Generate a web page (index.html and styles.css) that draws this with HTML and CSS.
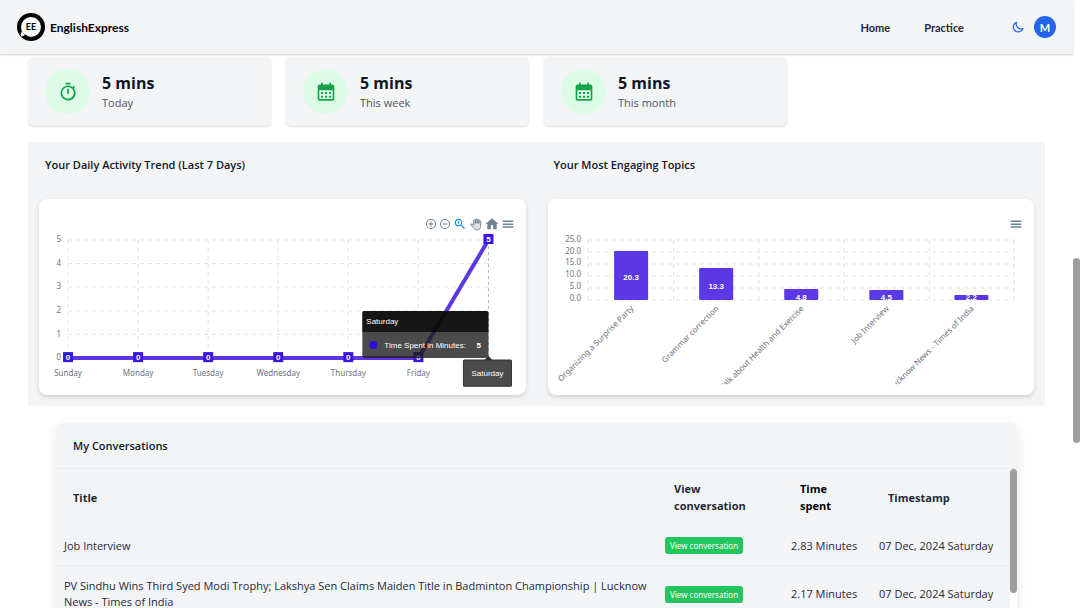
FILE: index.html
```html
<!DOCTYPE html>
<html lang="en">
<head>
<meta charset="utf-8">
<meta name="viewport" content="width=device-width, initial-scale=1">
<title>EnglishExpress</title>
<link rel="stylesheet" href="styles.css">
</head>
<body>
<header class="topbar">
  <a class="brand" href="#">
    <svg class="brand-mark" viewBox="0 0 28 28" aria-hidden="true">
      <circle cx="14" cy="14" r="14" fill="#050505"/>
      <circle cx="14" cy="14" r="10" fill="#f9fafb"/>
      <path d="M3.500 21.500L5 18l3 4.500-3.500 1z" fill="#f3f4f6"/>
      <path d="M5 24.500l3.500-3 3 2z" fill="#050505"/>
      <text x="14" y="17" class="mark-text">EE</text>
    </svg>
    <span>EnglishExpress</span>
  </a>
  <nav class="nav">
    <a href="#">Home</a>
    <a href="#">Practice</a>
  </nav>
  <div class="account">
    <button class="icon-btn" aria-label="Dark mode">
      <svg width="12" height="12" viewBox="0 0 24 24" fill="none" stroke="#2563eb" stroke-width="2.400" stroke-linejoin="round"><path d="M9 2.500a10 10 0 1 0 13 12.500c-8 3-16-4-13-12.500z"/></svg>
    </button>
    <button class="avatar">M</button>
  </div>
</header>

<main class="page">
  <section class="stats">
    <article class="stat">
      <span class="stat-icon"><svg viewBox="0 0 24 24" fill="#16a34a"><path d="M9 1h6v2H9zM11 8h2v6h-2z"/><path d="M19 7.400l1.400-1.400-1.400-1.400-1.500 1.400A9 9 0 1 0 19 7.400zM12 20a7 7 0 1 1 0-14 7 7 0 0 1 0 14z"/></svg></span>
      <div><p class="stat-value">5 mins</p><p class="stat-label">Today</p></div>
    </article>
    <article class="stat">
      <span class="stat-icon"><svg viewBox="0 0 24 24"><use href="#calendar"/></svg></span>
      <div><p class="stat-value">5 mins</p><p class="stat-label">This week</p></div>
    </article>
    <article class="stat">
      <span class="stat-icon"><svg viewBox="0 0 24 24"><defs><path id="calendar" fill="#16a34a" fill-rule="evenodd" d="M6 1h2v2h8V1h2v2h1.500A2.500 2.500 0 0 1 22 5.500v15a2 2 0 0 1-2 2H4a2 2 0 0 1-2-2v-15A2.500 2.500 0 0 1 4.500 3H6zM4 10v10.500h16V10zM6 12h2.500v2.500H6zm4.700 0h2.600v2.500h-2.600zm4.800 0H18v2.500h-2.500zM6 16.500h2.500V19H6zm4.700 0h2.600V19h-2.600zm4.800 0H18V19h-2.500z"/></defs><use href="#calendar"/></svg></span>
      <div><p class="stat-value">5 mins</p><p class="stat-label">This month</p></div>
    </article>
  </section>

  <section class="charts">
    <div class="chart">
      <h2 class="heading">Your Daily Activity Trend (Last 7 Days)</h2>
      <div class="chart-card">
        <div class="toolbar">
          <button class="icon-btn" aria-label="Zoom in"><svg width="12" height="12" viewBox="0 0 24 24" fill="#6e8192"><path d="M13 7h-2v4H7v2h4v4h2v-4h4v-2h-4zM12 2a10 10 0 1 0 0 20 10 10 0 0 0 0-20zm0 18a8 8 0 1 1 0-16 8 8 0 0 1 0 16z"/></svg></button>
          <button class="icon-btn" aria-label="Zoom out"><svg width="12" height="12" viewBox="0 0 24 24" fill="#6e8192"><path d="M7 11v2h10v-2zM12 2a10 10 0 1 0 0 20 10 10 0 0 0 0-20zm0 18a8 8 0 1 1 0-16 8 8 0 0 1 0 16z"/></svg></button>
          <button class="icon-btn" aria-label="Selection zoom"><svg width="14" height="14" viewBox="0 0 24 24" fill="#008ffb"><path d="M15.500 14h-.8l-.3-.3A6.500 6.500 0 1 0 13.700 14.400l.3.300v.8l5 5 1.500-1.500zm-6 0a4.500 4.500 0 1 1 0-9 4.500 4.500 0 0 1 0 9z"/><path d="M12 10h-2v2H9v-2H7V9h2V7h1v2h2z"/></svg></button>
          <button class="icon-btn" aria-label="Panning"><svg width="14" height="14" viewBox="0 0 24 24" fill="#dbe0e4" stroke="#6e8192" stroke-width="1.600" stroke-linejoin="round"><path d="M8 14V5.500q1.500-2 3 0V11 4q1.500-2 3 0v7-6q1.500-2 3 0v6-4q1.500-2 3 0v9c0 3-2 6-6 6s-5-2-7-4l-4-5c1-1.500 3-1 5 1z"/></svg></button>
          <button class="icon-btn" aria-label="Reset zoom"><svg width="14" height="14" viewBox="0 0 24 24" fill="#6e8192"><path d="M10 21v-7h4v7h6v-9h3L12 2 1 12h3v9z"/></svg></button>
          <button class="icon-btn" aria-label="Menu"><svg width="14" height="14" viewBox="0 0 24 24" fill="#6e8192"><path d="M3 18.500h18V16H3zm0-5h18V11H3zM3 6v2.500h18V6z"/></svg></button>
        </div>
        <svg class="plot" viewBox="0 0 486 163" role="img" aria-label="Time spent in minutes by day">
          <path class="grid" d="M29 8H449M29 31.500H449M29 55H449M29 79H449M29 102.500H449M29 8V126M99 8V126M169 8V126M239 8V126M309 8V126M379 8V126"/>
          <path class="crosshair" d="M449 8V126"/>
          <g class="axis axis-end"><text x="22" y="10">5</text><text x="22" y="34">4</text><text x="22" y="57">3</text><text x="22" y="81">2</text><text x="22" y="105">1</text><text x="22" y="128">0</text></g>
          <g class="axis axis-mid"><text x="29" y="144">Sunday</text><text x="99" y="144">Monday</text><text x="169" y="144">Tuesday</text><text x="239" y="144">Wednesday</text><text x="309" y="144">Thursday</text><text x="379" y="144">Friday</text></g>
          <path class="series" d="M29 126H379L449 8"/>
          <g class="point-box"><rect x="24" y="120" width="10" height="10"/><rect x="94" y="120" width="10" height="10"/><rect x="164" y="120" width="10" height="10"/><rect x="234" y="120" width="10" height="10"/><rect x="304" y="120" width="10" height="10"/><rect x="374" y="120" width="10" height="10"/><rect x="444" y="2" width="10" height="10"/></g>
          <g class="point-label"><text x="29" y="128">0</text><text x="99" y="128">0</text><text x="169" y="128">0</text><text x="239" y="128">0</text><text x="309" y="128">0</text><text x="379" y="128">0</text><text x="449" y="10">5</text></g>
          <g class="tip">
            <rect x="323" y="79" width="126" height="47" rx="2" fill="#1e1e1e" fill-opacity=".8"/>
            <path d="M323 100V81a2 2 0 0 1 2-2H447a2 2 0 0 1 2 2V100z" fill="#000" fill-opacity=".7"/>
            <text x="327" y="92">Saturday</text>
            <circle cx="334" cy="113" r="4" fill="#2e0ae0"/>
            <text x="345" y="116">Time Spent in Minutes:</text>
            <text x="437" y="116" font-weight="700">5</text>
            <path d="M445 128l4-4 4 4z" fill="#333"/>
            <rect x="424" y="128" width="48" height="26" rx="1" fill="#1e1e1e" fill-opacity=".8" stroke="#333"/>
            <text x="448" y="144" text-anchor="middle">Saturday</text>
          </g>
        </svg>
      </div>
    </div>

    <div class="chart">
      <h2 class="heading">Your Most Engaging Topics</h2>
      <div class="chart-card">
        <div class="toolbar">
          <button class="icon-btn" aria-label="Menu"><svg width="14" height="14" viewBox="0 0 24 24" fill="#6e8192"><path d="M3 18.500h18V16H3zm0-5h18V11H3zM3 6v2.500h18V6z"/></svg></button>
        </div>
        <svg class="plot" viewBox="0 0 486 163" role="img" aria-label="Minutes by topic">
          <defs><clipPath id="names"><rect x="0" y="68" width="486" height="84"/></clipPath><clipPath id="bars"><rect x="0" y="0" width="486" height="68"/></clipPath></defs>
          <g class="axis axis-end"><text x="33" y="10">25.0</text><text x="33" y="22">20.0</text><text x="33" y="33">15.0</text><text x="33" y="45">10.0</text><text x="33" y="57">5.0</text><text x="33" y="69">0.0</text></g>
          <path class="grid" d="M40 8H466M40 20H466M40 32H466M40 44H466M40 56H466M40 68H466M40 8V68M125.500 8V68M210.500 8V68M295.500 8V68M381 8V68M466 8V68"/>
          <g class="bar"><rect x="66" y="19" width="34" height="49" rx="1"/><rect x="151" y="36" width="34" height="32" rx="1"/><rect x="236" y="57" width="34" height="11" rx="1"/><rect x="321" y="58" width="34" height="10" rx="1"/><rect x="406" y="63" width="34" height="5" rx="1"/></g>
          <g class="point-label" clip-path="url(#bars)"><text x="83" y="48">20.3</text><text x="168" y="57">13.3</text><text x="253" y="68">4.8</text><text x="338" y="68">4.5</text><text x="423" y="68">2.2</text></g>
          <g class="axis axis-end" clip-path="url(#names)"><text transform="translate(86 77) rotate(-45)">Organizing a Surprise Party</text><text transform="translate(171 77) rotate(-45)">Grammar correction</text><text transform="translate(256 77) rotate(-45)">Talk about Health and Exercise</text><text transform="translate(341 77) rotate(-45)">Job Interview</text><text transform="translate(426 77) rotate(-45)">Lucknow News - Times of India</text></g>
        </svg>
      </div>
    </div>
  </section>

  <section class="conversations">
    <h2 class="heading conv-heading">My Conversations</h2>
    <div class="table-wrap">
      <table class="table">
        <colgroup><col><col class="col-view"><col class="col-time"><col class="col-stamp"></colgroup>
        <thead><tr><th>Title</th><th>View conversation</th><th class="strong">Time spent</th><th>Timestamp</th></tr></thead>
        <tbody>
          <tr><td>Job Interview</td><td><button class="view-btn">View conversation</button></td><td>2.83 Minutes</td><td>07 Dec, 2024 Saturday</td></tr>
          <tr><td>PV Sindhu Wins Third Syed Modi Trophy; Lakshya Sen Claims Maiden Title in Badminton Championship | Lucknow News - Times of India</td><td><button class="view-btn">View conversation</button></td><td>2.17 Minutes</td><td>07 Dec, 2024 Saturday</td></tr>
        </tbody>
      </table>
      <div class="table-track"><div class="thumb table-thumb"></div></div>
    </div>
  </section>
</main>
<div class="thumb page-thumb"></div>
</body>
</html>
```
FILE: styles.css
```css
* { box-sizing: border-box; }
body {
  margin: 0;
  height: 100vh;
  overflow: hidden;
  position: relative;
  padding-right: 7px;
  background: #fff;
  color: #1f2937;
  font-family: "Open Sans", "Noto Sans", sans-serif;
  font-size: 11px;
  line-height: 17px;
}
h2, p { margin: 0; }
button { border: 0; padding: 0; background: none; font: inherit; cursor: pointer; }
a { color: inherit; text-decoration: none; }
svg { display: block; }

.topbar {
  position: relative;
  display: flex;
  align-items: center;
  height: 54px;
  padding: 0 17px;
  background: #f3f4f6;
  box-shadow: 0 1px 2px rgba(0, 0, 0, .2);
  font-family: Lato, sans-serif;
  font-weight: 700;
}
.brand { display: flex; align-items: center; gap: 5px; margin-right: auto; color: #050505; font-size: 12px; }
.brand-mark { width: 28px; height: 28px; }
.mark-text { font: 700 9px Lato, sans-serif; text-anchor: middle; }
.nav { display: flex; gap: 34px; margin-right: 48px; }
.account { display: flex; align-items: center; gap: 10px; }
.icon-btn { display: flex; }
.avatar { width: 22px; height: 22px; border-radius: 50%; background: #2563eb; color: #fff; }

.page { padding: 3px 28px 0; }
.stats { display: grid; grid-template-columns: repeat(4, 1fr); gap: 15px; margin: 0 0 16px; }
.stat {
  display: flex;
  align-items: center;
  gap: 12px;
  height: 69px;
  padding: 0 17px;
  border-radius: 5px;
  background: #f3f4f6;
  box-shadow: 0 1px 2px rgba(0, 0, 0, .14);
}
.stat-icon { display: grid; place-items: center; width: 45px; height: 45px; border-radius: 50%; background: #dcfce7; }
.stat-icon svg { width: 20px; height: 20px; }
.stat-value { color: #111827; font-size: 16px; font-weight: 700; line-height: 21px; }
.stat-label { color: #4b5563; }

.charts {
  display: grid;
  grid-template-columns: 1fr 1fr;
  gap: 22px;
  padding: 14px 11px 11px;
  background: #f3f4f6;
}
.heading { color: #111827; font-size: 11px; font-weight: 600; line-height: 17px; }
.chart .heading { padding-left: 6px; margin-bottom: 26px; }
.chart-card {
  padding-top: 17px;
  border-radius: 8px;
  background: #fff;
  box-shadow: 0 2px 4px rgba(0, 0, 0, .14);
}
.toolbar { display: flex; align-items: center; justify-content: flex-end; gap: 2px; height: 16px; padding-right: 11px; }
.plot { width: 100%; height: auto; }
.grid { fill: none; stroke: #e3e3e3; stroke-dasharray: 4; }
.crosshair { stroke: #b6b6b6; stroke-dasharray: 3; }
.axis { fill: #6b7280; font-family: "Noto Sans", sans-serif; font-size: 8px; }
.axis-end { text-anchor: end; }
.axis-mid { text-anchor: middle; }
.series { fill: none; stroke: #5b38e3; stroke-width: 4; }
.point-box { fill: #3a14e0; }
.bar { fill: #5b38e3; }
.point-label { fill: #fff; font: 700 8px "Liberation Sans", sans-serif; text-anchor: middle; }
.tip { fill: #fff; font: 8px "Liberation Sans", sans-serif; }

.conversations {
  margin: 17px 28px 0;
  border-radius: 6px;
  background: #f3f4f6;
  box-shadow: 0 4px 12px rgba(0, 0, 0, .1);
}
.conv-heading { padding: 14px 17px; border-bottom: 1px solid #e9ebee; }
.table-wrap { display: flex; }
.table { flex: 1; border-collapse: collapse; table-layout: fixed; }
.col-view { width: 126px; }
.col-time { width: 88px; }
.col-stamp { width: 139px; }
.table th { height: 56px; padding: 0 17px; text-align: left; font-weight: 700; }
.table .strong { color: #000; }
.table td { padding: 12px 8px 11px; border-bottom: 1px solid #e9ebee; line-height: 16px; }
.view-btn {
  display: block;
  padding: 0 5px;
  border-radius: 3px;
  background: #22c55e;
  color: #fff;
  font-family: "Noto Sans", sans-serif;
  font-size: 8px;
  line-height: 17px;
}
.thumb { width: 7px; border-radius: 4px; background: #9e9e9e; }
.table-track { width: 7px; background: #fff; }
.table-thumb { height: 124px; }
.page-thumb { position: absolute; right: 0; top: 258px; height: 185px; }
```
